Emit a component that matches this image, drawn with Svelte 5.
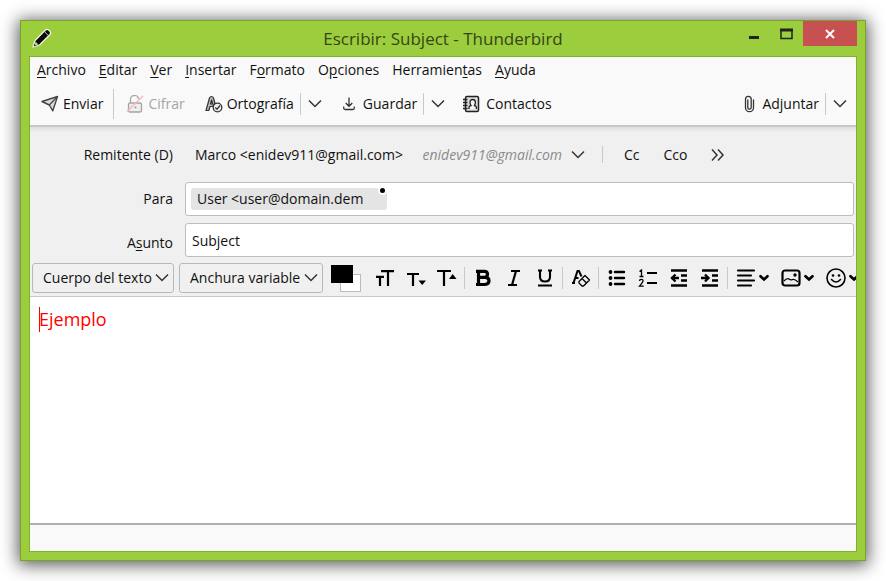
<script>
  let subject = $state('Subject');
  let body = $state('Ejemplo');

  const menus = [
    ['', 'A', 'rchivo'],
    ['', 'E', 'ditar'],
    ['', 'V', 'er'],
    ['', 'I', 'nsertar'],
    ['F', 'o', 'rmato'],
    ['O', 'p', 'ciones'],
    ['Herramien', 't', 'as'],
    ['', 'A', 'yuda']
  ];
</script>

{#snippet chevron()}
  <svg class="chev" width="14" height="14" viewBox="0 0 14 14"><path d="M1 3.500 7 9.500l6-6" fill="none" stroke="#333" stroke-width="1.500" /></svg>
{/snippet}

{#snippet smallChevron()}
  <svg width="10" height="10" viewBox="0 0 10 10"><path d="M1.500 3.200 5 6.500 8.500 3.200" fill="none" stroke="#000" stroke-width="2.600" stroke-linecap="round" /></svg>
{/snippet}

<main>
  <section class="window">
    <header class="titlebar">
      <svg class="pencil" width="20" height="20" viewBox="0 0 20 20">
        <path d="M1 19 3 12.500 13.500 2Q15 .8 17 2.200L18 3.300Q19.300 5 18 6.500L7.500 17Z" fill="#0a0a0a" stroke="#eef6dc" stroke-width="1.300" stroke-linejoin="round" />
        <path d="M12.800 4l3.700 3.700" stroke="#ddd" stroke-width=".9" />
        <path d="M2.200 17.800 3.700 13.800 6.400 16.400Z" fill="#c9cdbf" />
        <path d="M1.600 18.400 2.500 16.200 3.900 17.600Z" fill="#222" />
      </svg>
      <h1>Escribir: Subject - Thunderbird</h1>
      <div class="controls">
        <button aria-label="Minimizar"><svg width="10" height="12" viewBox="0 0 10 12"><path d="M0 9.500h10" stroke="#222" stroke-width="3" /></svg></button>
        <button aria-label="Maximizar"><svg width="13" height="12" viewBox="0 0 13 12"><path d="M1 2v8.500h11V2" fill="none" stroke="#222" stroke-width="1.500" /><path d="M0 2h13" stroke="#222" stroke-width="3" /></svg></button>
        <button class="close" aria-label="Cerrar"><svg width="10" height="10" viewBox="0 0 10 10"><path d="M1 1l8 8M9 1 1 9" stroke="#fff" stroke-width="2" /></svg></button>
      </div>
    </header>

    <div class="client">
      <nav class="menubar">
        {#each menus as [before, key, after]}
          <button>{before}<u>{key}</u>{after}</button>
        {/each}
      </nav>

      <div class="toolbar">
        <button class="tool">
          <svg width="18" height="18" viewBox="0 0 18 18"><path d="M1 6.500 16.500 1.500 11.800 15.800 8.300 10Z" fill="#dcdcdc" stroke="#444" stroke-width="1.400" stroke-linejoin="round" /><path d="M16 2 8.300 10" stroke="#444" stroke-width="1.200" /></svg>
          Enviar
        </button>
        <span class="rule tall"></span>
        <button class="tool cipher" disabled>
          <svg width="18" height="18" viewBox="0 0 18 18"><rect x="2.500" y="8" width="13" height="9" rx="1.500" fill="#eee" stroke="#a3a3a3" stroke-width="1.300" /><path d="M4.500 7.500V5a4 4 0 0 1 8-1" fill="none" stroke="#a3a3a3" stroke-width="1.300" /><circle cx="9.500" cy="12.500" r="1" fill="#999" /><path d="M1 16.500 17 1" stroke="#ffb3bd" stroke-width="1.500" /></svg>
          Cifrar
        </button>
        <button class="tool spell">
          <svg width="18" height="18" viewBox="0 0 18 18"><path d="M1 15.500 4.500 3Q5.200 1.500 6.500 1.500T8.500 3L10 8.500 7.500 11.500H5L3.800 15.500ZM5.500 9h2.200L6.600 5Z" fill="#bbb" stroke="#333" stroke-width="1.200" stroke-linejoin="round" /><circle cx="12.500" cy="12.500" r="4.300" fill="#eee" stroke="#333" stroke-width="1.300" /><path d="m10.300 12.500 1.700 1.700 3-3.700" fill="none" stroke="#333" stroke-width="1.300" /></svg>
          Ortografía
        </button>
        <span class="rule"></span>
        <button class="drop" aria-label="Idiomas">{@render chevron()}</button>
        <button class="tool save">
          <svg width="14" height="16" viewBox="0 0 14 16"><path d="M7 1.500v8.500M3.700 7 7 10.300 10.300 7M1.700 10.500v1.500q0 1.500 1.500 1.500h7.600q1.500 0 1.500-1.500v-1.500" fill="none" stroke="#333" stroke-width="1.300" /></svg>
          Guardar
        </button>
        <span class="rule"></span>
        <button class="drop" aria-label="Opciones de guardado">{@render chevron()}</button>
        <button class="tool contacts">
          <svg width="17" height="18" viewBox="0 0 17 18"><rect x="2.500" y="1.500" width="13" height="15" rx="1.500" fill="#ddd" stroke="#222" stroke-width="1.500" /><path d="M0 4.500h4.500M0 7.500h4.500M0 10.500h4.500M0 13.500h4.500" stroke="#222" stroke-width="1.300" /><path d="M6 14v-1.500q0-1.500 2-2Q7 9 7 7.500 7 4.500 9.700 4.500t2.700 3q0 1.500-1 3 2 .5 2 2V14" fill="#f5f5f5" stroke="#222" stroke-width="1.300" /></svg>
          Contactos
        </button>
        <button class="tool attach">
          <svg width="11" height="18" viewBox="0 0 11 18"><path d="M3.800 5v7.500a1.700 1.700 0 0 0 3.400 0V4.200a2.800 2.800 0 0 0-5.700 0v8.500a4 4 0 0 0 8 0V5" fill="none" stroke="#333" stroke-width="1.300" stroke-linecap="round" /></svg>
          Adjuntar
        </button>
        <span class="rule"></span>
        <button class="drop" aria-label="Opciones de adjuntos">{@render chevron()}</button>
      </div>

      <div class="headers">
        <label class="name" for="from">Remitente (D)</label>
        <div class="from-row">
          <div class="identity">
            <select id="from"><option>Marco &lt;enidev911@gmail.com&gt;</option></select>
            <span class="hint"><em>enidev911@gmail.com</em>{@render chevron()}</span>
          </div>
          <span class="rule short"></span>
          <button class="cc">Cc</button>
          <button class="cc">Cco</button>
          <button class="cc" aria-label="Más campos"><svg width="14" height="14" viewBox="0 0 14 14"><path d="m1 1.500 5 5.500-5 5.500M7 1.500l5 5.500-5 5.500" fill="none" stroke="#333" stroke-width="1.500" /></svg></button>
        </div>

        <label class="name" for="to">Para</label>
        <div class="field recipients">
          <span class="pill"><span class="address">User &lt;user@domain.demo&gt;</span><i class="dot"></i></span>
          <input id="to" type="text" />
        </div>

        <label class="name last" for="subject">A<u>s</u>unto</label>
        <input class="field last" id="subject" type="text" bind:value={subject} />
      </div>

      <div class="format">
        <div class="pick">
          <select aria-label="Formato de párrafo"><option>Cuerpo del texto</option></select>
          {@render chevron()}
        </div>
        <div class="pick wide">
          <select aria-label="Tipo de letra"><option>Anchura variable</option></select>
          {@render chevron()}
        </div>
        <button class="colors" aria-label="Colores"><svg width="31" height="27" viewBox="0 0 31 27"><rect x="9.500" y="9.500" width="20" height="17" fill="#fff" stroke="#bbb" /><rect width="22" height="18" fill="#000" /></svg></button>
        <button class="fmt" aria-label="Tamaño"><svg width="20" height="20" viewBox="0 0 20 20"><path d="M6 3.200h13M13 3.200V18M1 8.800h8M5 8.800V18" fill="none" stroke="#000" stroke-width="2.200" /></svg></button>
        <button class="fmt" aria-label="Reducir texto"><svg width="20" height="20" viewBox="0 0 20 20"><path d="M1 6h12M7 6v12" fill="none" stroke="#000" stroke-width="2.200" /><path d="M12.500 12.500h7.500L16.200 17Z" /></svg></button>
        <button class="fmt" aria-label="Aumentar texto"><svg width="20" height="20" viewBox="0 0 20 20"><path d="M0 3h14M7 3v15" fill="none" stroke="#000" stroke-width="2.200" /><path d="M12 11h7.500L15.700 6Z" /></svg></button>
        <span class="rule mid"></span>
        <button class="fmt" aria-label="Negrita"><svg width="20" height="20" viewBox="0 0 20 20"><path d="M3 3.300h8.500q3 0 3 3t-3 3H6m6 0q4 0 4 3.500t-4 3.700H3M5.500 3v13" fill="none" stroke="#000" stroke-width="3.200" /></svg></button>
        <button class="fmt" aria-label="Cursiva"><svg width="20" height="20" viewBox="0 0 20 20"><path d="M7 3h9M4 17h9M12 3 8 17" fill="none" stroke="#000" stroke-width="2.200" /></svg></button>
        <button class="fmt" aria-label="Subrayado"><svg width="20" height="20" viewBox="0 0 20 20"><path d="M5 2v7q0 4.500 5 4.500T15 9V2M3 2.500h4M13 2.500h4M3 17.500h14" fill="none" stroke="#000" stroke-width="2.100" /></svg></button>
        <span class="rule mid"></span>
        <button class="fmt" aria-label="Quitar formato"><svg width="20" height="20" viewBox="0 0 20 20"><path d="M2.500 15 6.500 3 8 3 10.500 8.500M4.500 10h3M1 15h3" fill="none" stroke="#000" stroke-width="2" /><path d="m8 13.500 6-6 4.500 4.500-6 6H11L8 15ZM11 10.500l4.500 4.500" fill="none" stroke="#000" stroke-width="1.300" stroke-linejoin="round" /></svg></button>
        <span class="rule mid"></span>
        <button class="fmt" aria-label="Lista con viñetas"><svg width="20" height="20" viewBox="0 0 20 20"><path d="M8 4h9M8 10h9M8 16h9" stroke="#000" stroke-width="2.400" stroke-linecap="round" /><circle cx="3.500" cy="4" r="1.900" /><circle cx="3.500" cy="10" r="1.900" /><circle cx="3.500" cy="16" r="1.900" /></svg></button>
        <button class="fmt" aria-label="Lista numerada"><svg width="20" height="20" viewBox="0 0 20 20"><path d="M9 5h10M9 15h10" stroke="#000" stroke-width="2.200" /><path d="M1.500 3.500 3.500 2v6.500M1.500 8.500h4M1.500 13q0-1.700 1.800-1.700t1.700 1.700q0 1-3.500 5.200h4.200" fill="none" stroke="#000" stroke-width="1.300" /></svg></button>
        <button class="fmt" aria-label="Reducir sangría"><svg width="20" height="20" viewBox="0 0 20 20"><path d="M2 2.500h16M12 7.500h6M12 12.500h6M2 17.500h16M2 10h8M6.500 6.500 3 10l3.500 3.500" fill="none" stroke="#000" stroke-width="2.300" /></svg></button>
        <button class="fmt" aria-label="Aumentar sangría"><svg width="20" height="20" viewBox="0 0 20 20"><path d="M2 2.500h16M12 7.500h6M12 12.500h6M2 17.500h16M1 10h8M5 6.500 8.500 10 5 13.500" fill="none" stroke="#000" stroke-width="2.300" /></svg></button>
        <span class="rule mid"></span>
        <button class="combo" aria-label="Alineación"><svg width="20" height="20" viewBox="0 0 20 20"><path d="M2 2.500h16M2 7.500h13M2 12.500h16M2 17.500h13" stroke="#000" stroke-width="2.200" stroke-linecap="round" /></svg>{@render smallChevron()}</button>
        <button class="combo" aria-label="Insertar imagen"><svg width="20" height="20" viewBox="0 0 20 20"><rect x="1.500" y="2.500" width="17" height="15" rx="2.500" fill="none" stroke="#000" stroke-width="2.200" /><path d="M3 13q3-3.500 5-2t3.500.5q2-.8 5.500 2.500" fill="none" stroke="#000" stroke-width="1.200" /><circle cx="14" cy="7" r="1.700" /></svg>{@render smallChevron()}</button>
        <button class="combo" aria-label="Emoticonos"><svg width="20" height="20" viewBox="0 0 20 20"><circle cx="10" cy="10" r="9" fill="none" stroke="#000" stroke-width="1.600" /><circle cx="7" cy="7.500" r="1.300" /><circle cx="13" cy="7.500" r="1.300" /><path d="M5.500 11.500q4.500 5 9 0" fill="none" stroke="#000" stroke-width="1.600" stroke-linecap="round" /></svg>{@render smallChevron()}</button>
      </div>

      <div class="editor">
        <textarea aria-label="Cuerpo del mensaje" bind:value={body}></textarea>
        <span class="caret"></span>
      </div>
      <footer></footer>
    </div>
  </section>
</main>

<style>
  :global(body) { margin: 0; background: #fff; }
  main, main * { box-sizing: border-box; }
  main {
    display: flex;
    min-height: 100vh;
    padding: 20px;
    overflow: hidden;
    font: 14px/20px "Open Sans", "Noto Sans", sans-serif;
    color: #111;
  }
  button, select, input, textarea {
    margin: 0;
    padding: 0;
    border: 0;
    background: none;
    color: inherit;
    font: inherit;
  }
  input, textarea { outline: none; }
  svg { display: block; flex: none; }
  u { text-underline-offset: 2px; }
  .window {
    display: flex;
    flex: 1;
    flex-direction: column;
    min-width: 0;
    padding: 0 8px 8px;
    border: 1px solid #78a22f;
    background: #9bcd3c;
    box-shadow: 0 2px 16px 2px rgba(0, 0, 0, 0.65);
  }
  .titlebar {
    display: grid;
    grid-template-columns: 1fr auto 1fr;
    height: 35px;
  }
  .pencil { margin: 7px 0 0 3px; }
  h1 {
    margin: 0;
    font-size: 17px;
    font-weight: 400;
    line-height: 36px;
    color: #35461a;
  }
  .controls { display: flex; justify-content: flex-end; height: 25px; }
  .controls button { display: grid; place-items: center; width: 33px; }
  .controls .close { width: 54px; background: #c75050; }
  .client {
    display: flex;
    flex: 1;
    flex-direction: column;
    min-height: 0;
    overflow: hidden;
    border: 1px solid #82ae35;
    background: #f9f9fa;
  }
  .menubar { display: flex; gap: 13px; height: 25px; padding-left: 7px; }
  .toolbar {
    display: flex;
    align-items: center;
    height: 45px;
    padding: 0 9px 0 11px;
    border-bottom: 2px solid #c8c8c8;
  }
  .tool { display: flex; align-items: center; gap: 4px; white-space: nowrap; }
  .cipher { color: #a5a5a5; }
  .spell { margin-left: 20px; }
  .save { gap: 7px; margin-left: 20px; }
  .contacts { gap: 6px; margin-left: 18px; }
  .attach { gap: 7px; margin-left: auto; }
  .rule { flex: none; width: 1px; height: 22px; margin: 0 7px 0 6px; background: #c8c8c8; }
  .tall { height: 30px; margin: 0 12px 0 10px; }
  .headers {
    display: grid;
    grid-template-columns: 143px 1fr;
    grid-template-rows: 55px 34px 41px;
    column-gap: 12px;
    align-items: center;
    padding-right: 2px;
    background: linear-gradient(#dedede, #f0f0f0 5px);
  }
  .name { text-align: right; }
  .from-row { display: flex; align-items: center; }
  .identity { display: grid; width: 400px; }
  .identity > * { grid-area: 1 / 1; }
  .identity select { padding-left: 10px; appearance: none; }
  .hint {
    display: flex;
    gap: 9px;
    align-items: center;
    justify-self: end;
    pointer-events: none;
    color: #8a8a8a;
  }
  .short { height: 17px; margin: 0 9px 0 17px; }
  .cc { padding: 0 12px; }
  .field {
    width: 100%;
    height: 34px;
    padding: 0 6px;
    border: 1px solid #bdbdbd;
    border-radius: 3px;
    background: #fff;
  }
  .last { align-self: end; line-height: 28px; }
  .recipients { display: flex; align-items: center; gap: 6px; padding: 0 5px; }
  .recipients input { flex: 1; min-width: 0; }
  .pill {
    position: relative;
    width: 196px;
    padding: 1px 6px;
    border-radius: 3px;
    background: #e4e4e4;
  }
  .address { display: block; width: 166px; overflow: hidden; white-space: nowrap; }
  .dot {
    position: absolute;
    top: -2px;
    right: 0;
    width: 9px;
    height: 9px;
    border: 2px solid #fff;
    border-radius: 50%;
    background: #000;
  }
  .format {
    display: flex;
    flex: none;
    align-items: center;
    height: 40px;
    padding: 6px 0 3px 2px;
    overflow: hidden;
    border-bottom: 1px solid #c8c8c8;
    background: #f0f0f0;
  }
  .pick { display: grid; flex: none; width: 142px; height: 30px; margin-right: 5px; }
  .pick > :global(*) { grid-area: 1 / 1; }
  .pick select {
    padding: 0 10px;
    border: 1px solid #b8b8b8;
    border-radius: 3px;
    appearance: none;
  }
  .pick :global(.chev) { align-self: center; justify-self: end; margin-right: 5px; pointer-events: none; }
  .wide { width: 144px; margin-right: 8px; }
  .colors { flex: none; margin-right: 7px; }
  .fmt { display: grid; flex: none; place-items: center; width: 31px; height: 28px; }
  .mid { margin: 0 2px; }
  .combo { display: flex; flex: none; gap: 3px; align-items: center; padding: 0 6px; }
  .editor { position: relative; display: flex; flex: 1; background: #fff; }
  textarea {
    flex: 1;
    padding: 10px 9px;
    resize: none;
    font-size: 18px;
    line-height: 25px;
    color: #f00;
  }
  .caret { position: absolute; top: 10px; left: 9px; width: 1px; height: 25px; background: #f00; }
  footer { height: 28px; border-top: 2px solid #b0b0b0; background: #f9f9f9; }
</style>
